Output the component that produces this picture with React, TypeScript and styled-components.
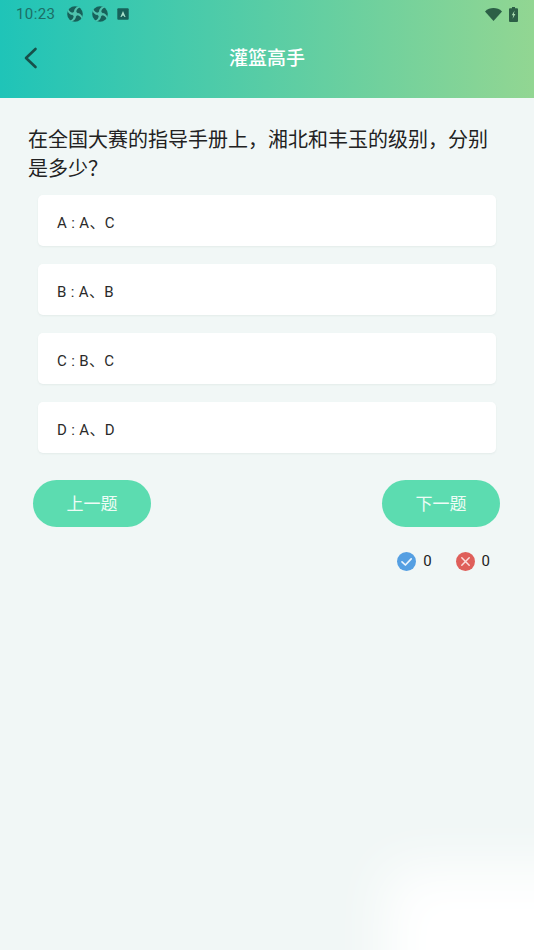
import React from "react";
import styled, { createGlobalStyle } from "styled-components";

const Global = createGlobalStyle`
  html, body { margin: 0; padding: 0; }
  body { width: 534px; height: 950px; overflow: hidden; font-family: Roboto, "Noto Sans CJK SC", sans-serif; }
`;

const Page = styled.div`
  width: 534px;
  height: 950px;
  display: flex;
  flex-direction: column;
  position: relative;
  overflow: hidden;
  background: #f1f7f6;
`;

const Glow = styled.div`
  position: absolute;
  left: 385px;
  top: 868px;
  width: 230px;
  height: 150px;
  background: #fff;
  filter: blur(28px);
`;

const Header = styled.header`
  height: 98px;
  flex: none;
  background: linear-gradient(90deg, #1fc4b8 0%, #92d692 100%);
  display: flex;
  flex-direction: column;
`;

const StatusBar = styled.div`
  height: 28px;
  padding: 0 16px;
  display: flex;
  align-items: center;
  color: #1c6f66;
  font-size: 15px;
  letter-spacing: 0.4px;
`;

const Time = styled.span`
  margin-right: 12px;
`;

const StatusIcons = styled.div`
  display: flex;
  align-items: center;
  gap: 9px;
`;

const StatusRight = styled.div`
  margin-left: auto;
  display: flex;
  align-items: center;
  gap: 7px;
`;

const NavBar = styled.div`
  height: 60px;
  display: flex;
  align-items: center;
  justify-content: center;
  position: relative;
`;

const BackButton = styled.button`
  position: absolute;
  left: 22px;
  top: 18px;
  padding: 0;
  border: 0;
  background: none;
  display: flex;
`;

const Title = styled.h1`
  margin: 0 0 3px;
  font-size: 19px;
  font-weight: 500;
  color: #fff;
  font-family: "Noto Sans CJK SC", sans-serif;
`;

const Question = styled.p`
  margin: 26px 38px 0 28px;
  font-size: 20px;
  line-height: 29px;
  color: #222;
  font-family: "Noto Sans CJK SC", sans-serif;
  font-weight: 400;
`;

const OptionList = styled.div`
  margin: 13px 38px 0;
  display: flex;
  flex-direction: column;
  gap: 18px;
`;

const Option = styled.div`
  height: 51px;
  box-sizing: border-box;
  padding: 2px 19px 0;
  display: flex;
  align-items: center;
  background: #fff;
  border-radius: 5px;
  box-shadow: 0 1px 2px rgba(170, 190, 185, 0.2);
  font-size: 15px;
  color: #2a2a2a;
  letter-spacing: 0.35px;
  font-family: Roboto, "Noto Sans CJK SC", sans-serif;
`;

const Buttons = styled.div`
  margin: 27px 34px 0 33px;
  display: flex;
  justify-content: space-between;
`;

const NavButton = styled.button`
  width: 118px;
  height: 47px;
  border: 0;
  border-radius: 24px;
  background: #5cdcb0;
  color: #eefcf6;
  font-size: 17px;
  font-family: "Noto Sans CJK SC", sans-serif;
  padding: 0 0 2px;
`;

const Score = styled.div`
  margin: 24px 44px 0 0;
  display: flex;
  justify-content: flex-end;
  gap: 24px;
`;

const ScoreItem = styled.div`
  display: flex;
  align-items: center;
  gap: 7px;
  font-size: 15px;
  color: #222;
  line-height: 20px;
`;

const Aperture = () => (
  <svg width="16" height="16" viewBox="0 0 16 16">
    <circle cx="8" cy="8" r="7.8" fill="#17615a" />
    <path d="M8 4.6 L11.4 8 L8 11.4 L4.6 8Z" fill="#4fc3ad" />
    <path
      d="M7 5.4 C7.2 3.4 8.6 1.2 11 0.6 L12.6 1.6 C10.6 2.2 9.4 4 9.2 6.2Z
         M10.6 7 C12.6 7.2 14.8 8.6 15.4 11 L14.4 12.6 C13.8 10.6 12 9.4 9.8 9.2Z
         M9 10.6 C8.8 12.6 7.4 14.8 5 15.4 L3.4 14.4 C5.4 13.8 6.6 12 6.8 9.8Z
         M5.4 9 C3.4 8.8 1.2 7.4 0.6 5 L1.6 3.4 C2.2 5.4 4 6.6 6.2 6.8Z"
      fill="#4fc3ad"
    />
  </svg>
);

const TextBadge = () => (
  <svg width="12" height="12" viewBox="0 0 12 12">
    <rect x="0.3" y="0.3" width="11.4" height="11.4" rx="1" fill="#17615a" />
    <path d="M3.4 9 L6 3 L8.6 9 H7.4 L6.9 7.7 H5.1 L4.6 9Z" fill="#a8e0cc" />
  </svg>
);

const Wifi = () => (
  <svg width="17" height="13" viewBox="0 0 17 13">
    <path d="M0 3.4 C4.8 -1 12.2 -1 17 3.4 L8.5 13Z" fill="#2c5f46" />
  </svg>
);

const Battery = () => (
  <svg width="9" height="15" viewBox="0 0 9 15">
    <path d="M3 0 H6 V1.2 H8 A1 1 0 0 1 9 2.2 V14 A1 1 0 0 1 8 15 H1 A1 1 0 0 1 0 14 V2.2 A1 1 0 0 1 1 1.2 H3Z" fill="#2c5f46" />
    <path d="M5.6 3.6 L2.8 8.2 H4.3 L3.6 11.8 L6.4 6.9 H4.8Z" fill="#a9dcb0" />
  </svg>
);

const Chevron = () => (
  <svg width="18" height="24" viewBox="0 0 18 24" fill="none">
    <path d="M13.5 3 L4 12 L13.5 21" stroke="#17504a" strokeWidth="2.6" strokeLinecap="round" strokeLinejoin="round" />
  </svg>
);

const RightIcon = () => (
  <svg width="19" height="19" viewBox="0 0 19 19" fill="none">
    <circle cx="9.5" cy="9.5" r="9.5" fill="#559fe2" />
    <path d="M5 9.8 L8.4 13 L14.2 6.8" stroke="#eaf4fd" strokeWidth="1.7" strokeLinecap="round" strokeLinejoin="round" />
  </svg>
);

const WrongIcon = () => (
  <svg width="19" height="19" viewBox="0 0 19 19" fill="none">
    <circle cx="9.5" cy="9.5" r="9.5" fill="#df5f5a" />
    <path d="M5.8 5.8 L13.2 13.2 M13.2 5.8 L5.8 13.2" stroke="#fbdedd" strokeWidth="1.5" strokeLinecap="round" />
  </svg>
);

const options = ["A : A、C", "B : A、B", "C : B、C", "D : A、D"];

export default function App() {
  return (
    <Page>
      <Global />
      <Glow />
      <Header>
        <StatusBar>
          <Time>10:23</Time>
          <StatusIcons>
            <Aperture />
            <Aperture />
            <TextBadge />
          </StatusIcons>
          <StatusRight>
            <Wifi />
            <Battery />
          </StatusRight>
        </StatusBar>
        <NavBar>
          <BackButton aria-label="返回">
            <Chevron />
          </BackButton>
          <Title>灌篮高手</Title>
        </NavBar>
      </Header>
      <Question>在全国大赛的指导手册上，湘北和丰玉的级别，分别是多少？</Question>
      <OptionList>
        {options.map((o) => (
          <Option key={o}>{o}</Option>
        ))}
      </OptionList>
      <Buttons>
        <NavButton>上一题</NavButton>
        <NavButton>下一题</NavButton>
      </Buttons>
      <Score>
        <ScoreItem>
          <RightIcon />0
        </ScoreItem>
        <ScoreItem>
          <WrongIcon />0
        </ScoreItem>
      </Score>
    </Page>
  );
}
